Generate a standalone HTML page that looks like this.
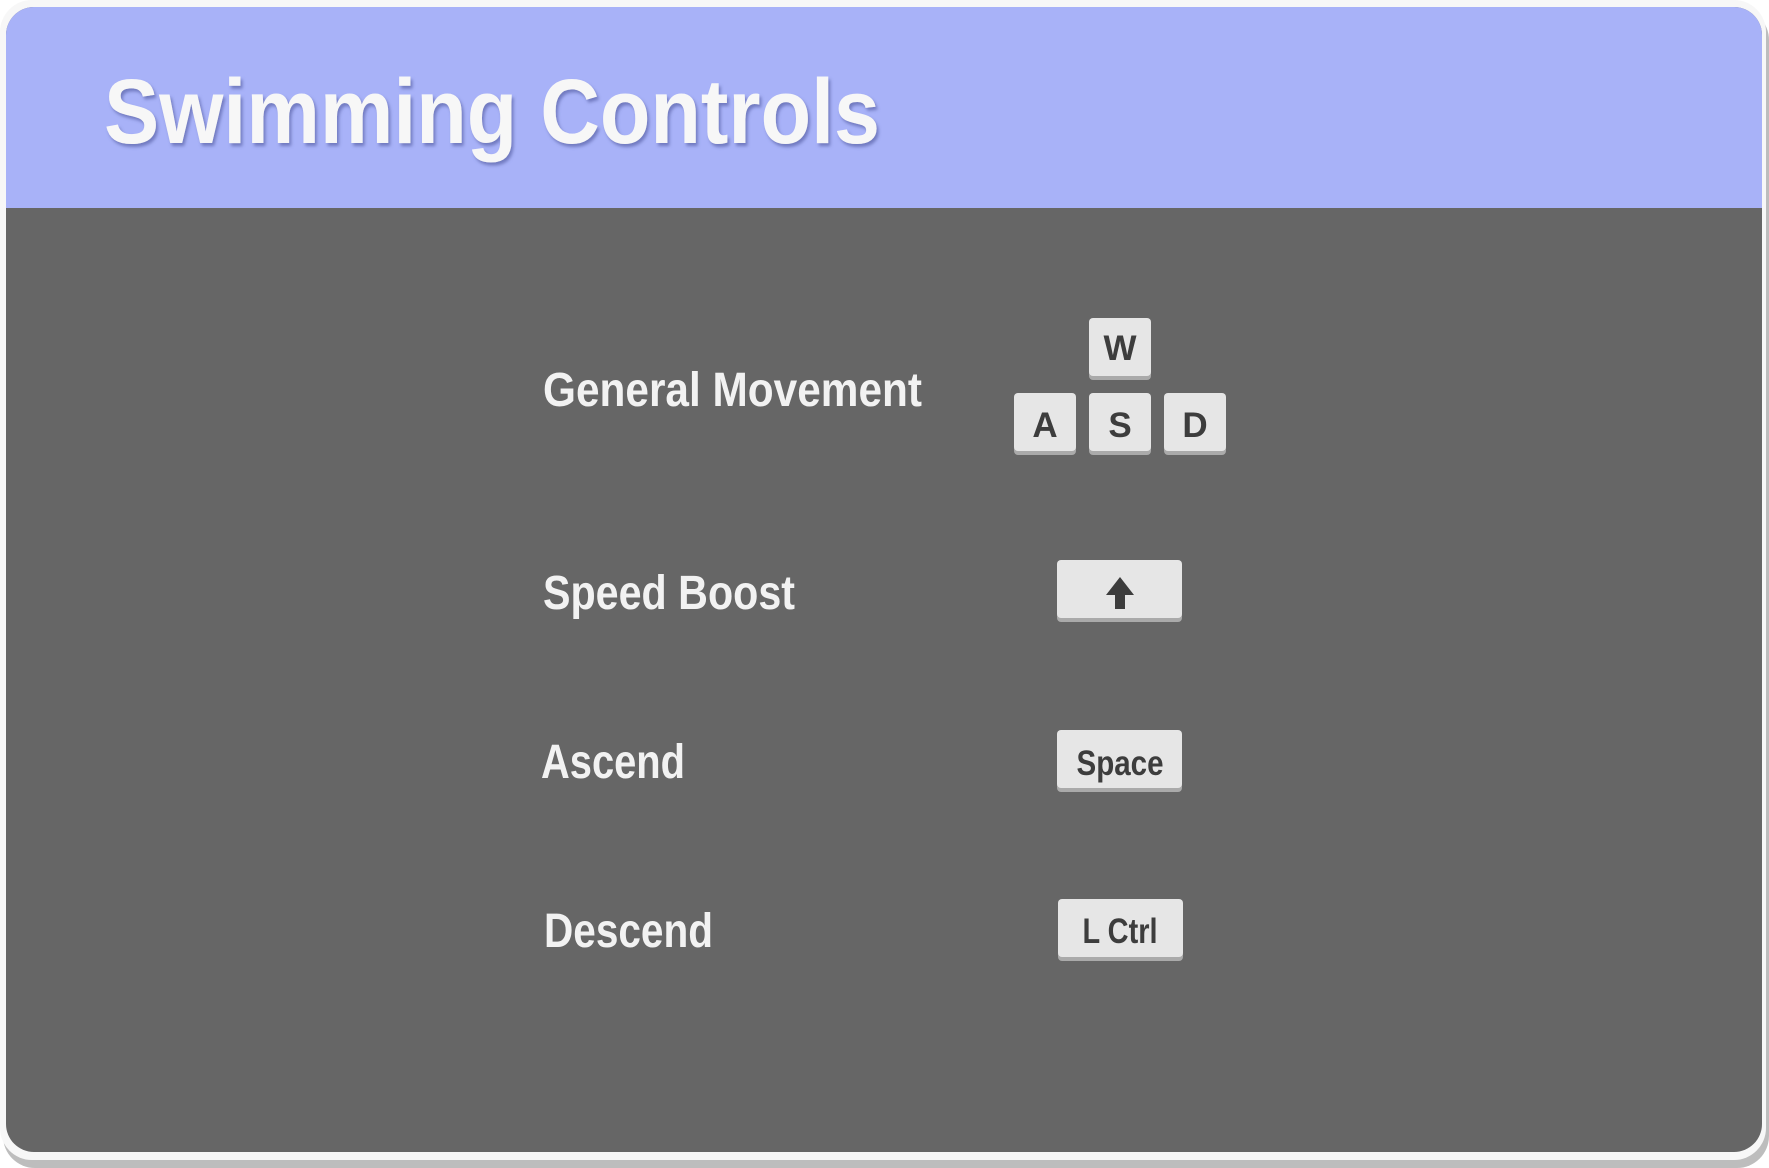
<!DOCTYPE html>
<html><head><meta charset="utf-8"><style>
html,body{margin:0;padding:0;background:#fff;width:1769px;height:1168px;overflow:hidden}
</style></head><body>
<svg width="1769" height="1168" viewBox="0 0 1769 1168" xmlns="http://www.w3.org/2000/svg" font-family="'Liberation Sans', sans-serif" font-weight="bold">
<defs>
<clipPath id="cp"><rect x="6" y="7" width="1756" height="1145" rx="28"/></clipPath>
<filter id="ts" x="-5%" y="-20%" width="110%" height="140%"><feDropShadow dx="2" dy="3" stdDeviation="1.5" flood-color="#5a63a8" flood-opacity="0.7"/></filter>
</defs>
<rect x="3" y="8" width="1766" height="1160" rx="32" fill="#bdbdbd"/>
<rect x="0" y="0" width="1766" height="1160" rx="32" fill="#f7f7f7"/>
<g clip-path="url(#cp)">
<rect x="0" y="0" width="1769" height="1168" fill="#666666"/>
<rect x="0" y="0" width="1769" height="208" fill="#a8b2f8"/>
</g>
<text x="104" y="143" font-size="92" fill="#f7f7f7" textLength="776" lengthAdjust="spacingAndGlyphs" filter="url(#ts)">Swimming Controls</text>
<g fill="#f2f2f2" font-size="48">
<text x="543" y="406" textLength="379" lengthAdjust="spacingAndGlyphs">General Movement</text>
<text x="543" y="609" textLength="252" lengthAdjust="spacingAndGlyphs">Speed Boost</text>
<text x="541" y="778" textLength="144" lengthAdjust="spacingAndGlyphs">Ascend</text>
<text x="544" y="947" textLength="169" lengthAdjust="spacingAndGlyphs">Descend</text>
</g>
<g>
<rect x="1089" y="321" width="62" height="59" rx="4" fill="#aaa"/><rect x="1089" y="318" width="62" height="58" rx="4" fill="#e6e6e6"/>
<rect x="1014" y="396" width="62" height="59" rx="4" fill="#aaa"/><rect x="1014" y="393" width="62" height="58" rx="4" fill="#e6e6e6"/>
<rect x="1089" y="396" width="62" height="59" rx="4" fill="#aaa"/><rect x="1089" y="393" width="62" height="58" rx="4" fill="#e6e6e6"/>
<rect x="1164" y="396" width="62" height="59" rx="4" fill="#aaa"/><rect x="1164" y="393" width="62" height="58" rx="4" fill="#e6e6e6"/>
<rect x="1057" y="563" width="125" height="59" rx="4" fill="#aaa"/><rect x="1057" y="560" width="125" height="58" rx="4" fill="#e6e6e6"/>
<rect x="1057" y="733" width="125" height="59" rx="4" fill="#aaa"/><rect x="1057" y="730" width="125" height="58" rx="4" fill="#e6e6e6"/>
<rect x="1058" y="902" width="125" height="59" rx="4" fill="#aaa"/><rect x="1058" y="899" width="125" height="58" rx="4" fill="#e6e6e6"/>
</g>
<g fill="#3d3d3d" font-size="35" text-anchor="middle">
<text x="1120" y="360">W</text>
<text x="1045" y="437">A</text>
<text x="1120" y="437">S</text>
<text x="1195" y="437">D</text>
<text x="1120" y="775" textLength="87" lengthAdjust="spacingAndGlyphs">Space</text>
<text x="1120" y="943" textLength="75" lengthAdjust="spacingAndGlyphs">L Ctrl</text>
</g>
<path d="M1120 577 L1134 595 L1125 595 L1125 609 L1115 609 L1115 595 L1106 595 Z" fill="#3d3d3d"/>
</svg>
</body></html>
